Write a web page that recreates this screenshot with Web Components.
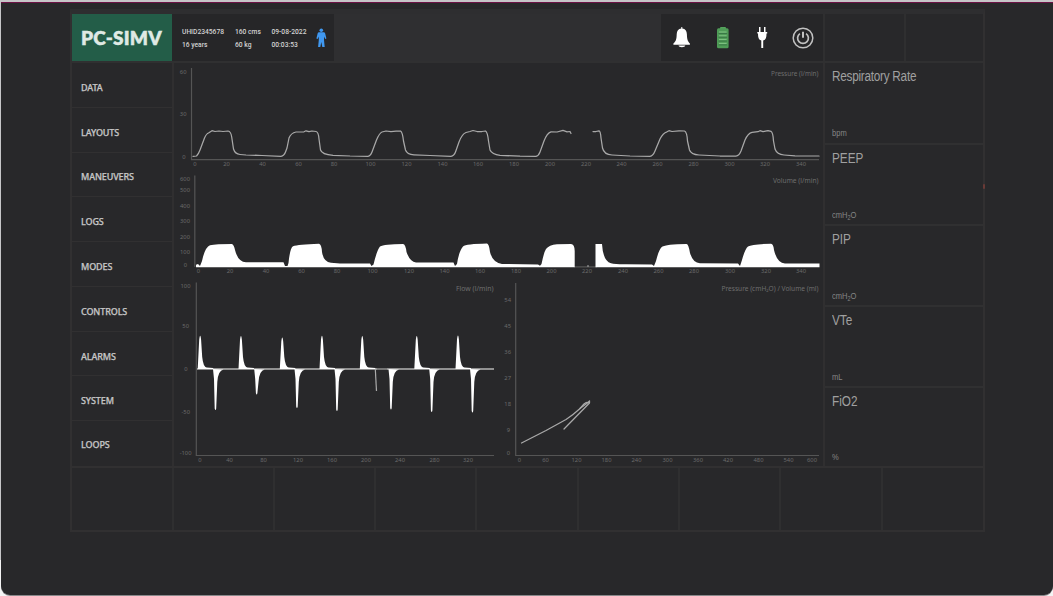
<!DOCTYPE html>
<html lang="en">
<head>
<meta charset="utf-8">
<title>Ventilator monitor</title>
<style>
html,body{margin:0;height:100%;background:#c6c6c8;overflow:hidden}
body{font-family:"Noto Sans","Open Sans",sans-serif;color:#c4c4c4}
sub{font-size:6.500px;line-height:0;vertical-align:-2px}
</style>
</head>
<body>
<vent-screen>
  <top-bar slot="top"></top-bar>
  <side-menu slot="menu">
    <menu-entry>DATA</menu-entry><menu-entry>LAYOUTS</menu-entry><menu-entry>MANEUVERS</menu-entry>
    <menu-entry>LOGS</menu-entry><menu-entry>MODES</menu-entry><menu-entry>CONTROLS</menu-entry>
    <menu-entry>ALARMS</menu-entry><menu-entry>SYSTEM</menu-entry><menu-entry>LOOPS</menu-entry>
  </side-menu>
  <chart-area slot="charts"></chart-area>
  <vital-card slot="vitals" style="--track:-.3px">Respiratory Rate<span slot="unit">bpm</span></vital-card>
  <vital-card slot="vitals">PEEP<span slot="unit">cmH<sub>2</sub>O</span></vital-card>
  <vital-card slot="vitals">PIP<span slot="unit">cmH<sub>2</sub>O</span></vital-card>
  <vital-card slot="vitals">VTe<span slot="unit">mL</span></vital-card>
  <vital-card slot="vitals">FiO2<span slot="unit">%</span></vital-card>
</vent-screen>
<script>
const define=(name,html,init)=>customElements.define(name,class extends HTMLElement{
  constructor(){
    super();
    const t=document.createElement('template');
    t.innerHTML=html;
    this.attachShadow({mode:'open'}).append(t.content.cloneNode(true));
  }
  connectedCallback(){ if(init) init.call(this); }
});

define('vent-screen',`<style>
:host{display:block;width:1053px;height:596px;box-sizing:border-box;padding:2px 0 1px 1px;background:linear-gradient(#c6c6c8 560px,#f4f4f4 560px)}
.case{height:593px;box-sizing:border-box;background:#28282a;border-top:1px solid #6c1245;border-radius:0 0 9px 9px;padding:6px 0 0 69px;box-shadow:0 1px 0 #88888a}
.frame{position:relative;width:915px;height:523px;box-sizing:border-box;border:2px solid #313031;border-top:5px solid #2e2e30;display:grid;grid-template-rows:47px 407px 1fr}
.main{display:grid;grid-template-columns:100px 653px 1fr;border-top:2px solid #303031;border-bottom:2px solid #313031;box-sizing:border-box}
.charts{border:solid #302f30;border-width:0 2px;box-sizing:border-box}
.vitals{display:grid;grid-template-rows:82px 81px 81px 81px 1fr}
.bottom{display:grid;grid-template-columns:100px repeat(7,101.300px) 1fr}
.bottom i{border-left:2px solid #2f2f30;margin-left:-.5px}
.bottom i:first-child{border:0}
.mark{position:absolute;right:-2px;top:170px;width:2px;height:5px;background:#693a36;border-radius:1px}
</style>
<div class="case"><div class="frame">
<slot name="top"></slot>
<div class="main"><slot name="menu"></slot><div class="charts"><slot name="charts"></slot></div><div class="vitals"><slot name="vitals"></slot></div></div>
<div class="bottom"><i></i><i></i><i></i><i></i><i></i><i></i><i></i><i></i><i></i></div>
<div class="mark"></div>
</div></div>`);

define('top-bar',`<style>
:host{display:grid;grid-template-columns:100px 162px 327px 162px 81px 1fr;height:47px}
.mode{background:#235d48;color:#dfe9e4;font:800 19px/48px Lato,sans-serif;padding-left:9px;white-space:nowrap;letter-spacing:.15px;-webkit-text-stroke:.35px #dfe9e4}
.patient{display:grid;grid-template-columns:53px 36.500px 44.500px 1fr;padding-left:10px;align-items:center;background:#262628;font:500 6.700px/13px Roboto,sans-serif;color:#d2d2d2;white-space:nowrap}
.patient div{padding-top:1.400px}
.mid{background:#2f2f31}
.icons{display:grid;grid-template-columns:repeat(4,40.400px);padding-left:1px;box-sizing:border-box;background:#262628;align-items:center;justify-items:center}
.cell{border-left:2px solid #2f2f30}
svg{display:block}
</style>
<div class="mode">PC-SIMV</div>
<div class="patient"><div>UHID2345678<br>16 years</div><div>160 cms<br>60 kg</div><div>09-08-2022<br>00:03:53</div>
<svg width="11" height="20" viewBox="0 0 11 20" fill="#4098f0"><circle cx="5.3" cy="2.2" r="1.8"/><path d="M3 4.300h4.800q1 0 1.300 1l1.300 5.200-1.200.5-1.200-2.500v3.500l.7 6.900H6.300l-1-4.800-1 4.800H2.100l.7-6.900V8.500l-1.200 2.500-1.200-.5L1.700 5.300q.3-1 1.300-1Z"/></svg></div>
<div class="mid"></div>
<div class="icons">
<svg width="20" height="24" viewBox="0 0 20 24" fill="#fff"><path d="M9.300 1h1v1.500c3 .4 4.500 2.500 4.600 5.800.1 5 .8 7.200 3 9.200v1.300H1.400v-1.300c2.500-2 3.200-4.300 3.300-9.200.1-3.300 1.600-5.400 4.600-5.800ZM6.500 19.500h6.800c-.3 1.300-1.400 1.700-3.400 1.700s-3.100-.4-3.400-1.700Z"/></svg>
<svg width="14" height="24" viewBox="0 0 14 24"><rect x="4" y="1" width="6" height="3" rx="1" fill="#55a45c"/><rect x="1" y="2.200" width="11.600" height="20" rx="1.500" fill="#4f9c57"/><path d="M3 6h7.600M3 9.800h7.600M3 13.600h7.600M3 17.400h7.600" stroke="#83c486" stroke-width="1"/><path d="M2.500 7.500h8.600M2.500 11.300h8.600M2.500 15.100h8.600M2.500 18.900h8.600" stroke="#356f42" stroke-width=".8"/></svg>
<svg width="13" height="24" viewBox="0 0 13 24" fill="#fff"><path d="M3 1h1.500v5H8V1h1.500v5h1.700v1.500h-.7c0 4-.6 6.300-3.300 7V22H5.300v-7.500C2.600 13.800 2 11.500 2 7.500h-.7V6H3Z"/></svg>
<svg width="24" height="24" viewBox="0 0 24 24" fill="none" stroke="#c1c1c1" stroke-width="1.500"><circle cx="12" cy="12" r="9.800"/><path d="M8.900 7.600a5.400 5.400 0 1 0 6.200 0" stroke-width="1.700"/><path d="M12 5.800v6" stroke-width="2"/></svg>
</div>
<div class="cell"></div><div class="cell"></div>`);

define('side-menu',`<style>:host{display:grid;grid-template-rows:repeat(9,1fr)}</style><slot></slot>`);

define('menu-entry',`<style>
:host{display:flex;align-items:center;padding:5px 0 0 9px;border-bottom:1.500px solid #313031;font:500 9px "Noto Sans",sans-serif;color:#c6c6c6;letter-spacing:-.12px;-webkit-text-stroke:.25px #c6c6c6}
:host(:last-of-type){border-bottom:0;padding-top:2px}
</style><slot></slot>`);

define('vital-card',`<style>
:host{display:flex;flex-direction:column;justify-content:space-between;padding:5px 0 3px 7px;border-bottom:2px solid #303031;box-sizing:border-box;color:#a0a0a0;min-height:0}
:host(:first-of-type){padding-bottom:4px}
:host(:last-of-type){border-bottom:0}
.name,.unit{transform-origin:0 50%;transform:scaleX(.84);white-space:nowrap}
.name{font:14px/16px "Liberation Sans",sans-serif;letter-spacing:var(--track,0)}
.unit{font:9px/12px "Liberation Sans",sans-serif;color:#858585}
</style><div class="name"><slot></slot></div><div class="unit"><slot name="unit"></slot></div>`);

/* Each plot uses screen units, so neighbouring plots share one coordinate system. */
const plots={
 pressure:{box:[174,63,648,106],title:['Pressure (l/min)',818.500,76,47.500],
  y:[[186.500,73.500,'60'],[186.500,115.500,'30'],[185.500,159,'0']],
  x:{y:166,w:8,v:[[195,'0'],[226.500,'20'],[262.500,'40'],[298.500,'60'],[334,'80'],[370.500,'100'],[406.500,'120'],[442.500,'140'],[478,'160'],[514,'180'],[550,'200'],[586,'220'],[621.500,'240'],[657.500,'260'],[693.500,'280'],[729.500,'300'],[765,'320'],[801,'340']]},
  body:`<path class="ax" d="M191.500 68V159.700H819"/>
  <path class="ln" d="M193 156.300L196.500 156Q198.500 154 200 150L204.500 138Q206.500 133.500 208.500 133L212 130.700 215 131.500 219 131 223 131.500 228 131Q231 131.500 231.700 137L233.500 149Q235 154 240 154.500L246 155 262 155.500 281 156.300Q284 156 285.500 152L287 148 289 138Q291 133 296 132L304 131.800 306 130.800 309 131.700 312 131 316 131.500Q318.500 132 319 139L320.500 150Q322 154.500 333 155.300L350 156 368 156.300Q370.500 156 372 152L376.500 140Q379.500 133 382 132L386 131 391 131.700 396 131.200 400.500 131Q402.500 132 403.500 141L405.500 150Q407 154.500 414 154.800L430 155.500 451 156.300Q454 156 455.500 152L459 142Q462 134 466 132.500L470 131.500 473 130.500 477 131.500 482 131.500 485.500 131Q487.500 132 488.500 141L490 150Q492 154.500 500 155.300L520 156.200 536 156.400Q538.500 156 540 152L544 141Q547 133 551 131.800L557 132 563 130.400 567 131.800 570 131.500 571 133.500M593 131.500H596L599 130.800Q600.500 131 601 138L602.500 148Q604 154.500 612 155L630 156 650 156.300Q653 156 655 151L660 139Q663 133 667 131.800L669 130.700 672 131.500 679 130.800 684.500 131Q687 132 687.500 141L689.500 150Q691 154.500 699 155L720 156 736 156Q739 156 741 151L745 140Q748 133 752 132.300L758 131.700 760 130.700 763 131.700 768 130.600 771 131.300Q773 132.500 773.500 141L775 149Q777 154.500 784 155L795 155.800 819 156"/>`},
 volume:{box:[174,169,648,107],title:['Volume (l/min)',818.500,183,45.500],
  y:[[190,180.500,'600'],[190,192,'500'],[190,207.500,'400'],[190,223,'300'],[190,238.500,'200'],[190,253.500,'100'],[187,266.500,'0']],
  x:{y:273,w:8,v:[[198.500,'0'],[230,'20'],[266,'40'],[301.500,'60'],[337,'80'],[372.500,'100'],[409,'120'],[444.500,'140'],[480,'160'],[516,'180'],[551.500,'200'],[587,'220'],[623,'240'],[658.500,'260'],[694,'280'],[730,'300'],[766,'320'],[801,'340']]},
  body:`<path class="ax" d="M194.800 175.500V267M574 266.800H597"/>
  <path fill="#fff" d="M196 267.200V264.700L198 264 200 266 202 261Q205 247 210 245.200 216 244 232 244 234 245 235 250 238 262 246 262.200H283.500L285 266H287.500L288.500 263Q290 248 293 246.300 298 244.300 319 243.700 321.500 244 322 252 323.500 262 331 262.700L340 263.500H370L371.500 266 373.500 264.500Q377 250 380 246.500 384 244 403 244 405.500 244 406.500 252 410 262 416 262.400H453.500L455 266 457 264Q459 251 463 246.500 466 244 487 243.600 489 244 490 252 492.500 262.500 502 264L538 264.500 540 265.700 541.500 264Q544 252 546 249 549 245 557 244.300L571 244Q574.500 244 574.700 251V267.200Z"/>
  <path fill="#fff" d="M595.500 267.200V244H602Q603 261 611 263.300 615 264.400 626 264.300L652 264.600 654 266 656 261Q659 249 662 246.800 666 244.200 686.500 244 688.500 244 690 253 693 263 700 263.300L738 263.600 740 266 742 260Q745 249 748 246.500 752 244 771 243.700 773.500 244 774 250 777 263 785 263.500H819.500V267.200Z"/><circle cx="588" cy="266" r=".8" fill="#bbb"/>`},
 flow:{box:[174,276,324,189],title:['Flow (l/min)',493.500,290.500,37.500],
  y:[[190.500,288,'100'],[189,327.500,'50'],[187.500,371,'0'],[190,414,'-50'],[191.500,454.500,'-100']],
  x:{y:461.500,w:8,v:[[200,'0'],[229.500,'40'],[263.500,'80'],[298,'120'],[332,'160'],[366,'200'],[400,'240'],[434.500,'280'],[468,'320']]},
  body:''},
 loop:{box:[498,276,324,189],title:['Pressure (cmH₂O) / Volume (ml)',818.500,290.500,97],
  y:[[511,301.500,'54'],[511,327.500,'45'],[511,354,'36'],[511,380,'27'],[511,405.500,'18'],[510,431.500,'9'],[510,455,'0']],
  x:{y:461.500,w:8,v:[[519.500,'0'],[545.500,'60'],[576.500,'120'],[606.500,'180'],[636.500,'240'],[667.500,'300'],[698,'360'],[728,'420'],[758.500,'480'],[788.500,'540'],[812,'600']]},
  body:`<path class="ax" d="M515.700 283V455.500H819"/><path class="ln" d="M521.500 443L546 430.500 566 419.500Q573 415 579.500 409L584 404Q586 402 588.500 402L589.500 400.800V403L564 429"/><path class="ln" d="M580 408.500L586 404 589 402"/>`}
};
{
  let s='<path class="ax" d="M196.300 282.500V455.500H494"/><path d="M197 369H494" stroke="#b5b5b5" stroke-width="1.300"/>';
  for(const [x,t] of [[200.200,335.700],[241,336],[282.300,337.500],[322,335.800],[362.300,336],[416.800,336],[458,335.500]])
    s+=`<path fill="#fff" d="M${x-2.500} 369L${x-1} ${t+4}Q${x} ${t-4} ${x+.9} ${t+4}L${x+2} 357Q${x+3} 367 ${x+6.500} 367.500L${x+13} 368V369Z"/>`;
  for(const [x,b] of [[215.500,410.500],[256.700,395],[297,408.500],[337,411.500],[391,410],[431.700,412.500],[472.500,413]])
    s+=`<path fill="#fff" d="M${x-2.500} 369L${x-1.500} 379 ${x-.8} ${b-2}Q${x} ${b+1} ${x+.7} ${b-2}L${x+1.800} 382Q${x+2.500} 370.500 ${x+8} 369.500Z"/>`;
  s+='<path d="M375.300 369L376.500 391" stroke="#aaa" stroke-width="1.200"/><path d="M377 369H387" stroke="#6d6d6d" stroke-width="1.500"/>';
  plots.flow.body=s;
}

define('wave-plot',`<style>
:host{display:block}
svg{display:block}
text{font:5.800px "Noto Sans",sans-serif;fill:#6b6b6b}
.title{font-size:6.400px;fill:#6e6e6e}
.ax{fill:none;stroke:#555;stroke-width:1.200}
.ln{fill:none;stroke:#a9a9a9;stroke-width:1.250;stroke-linejoin:round;stroke-linecap:round}
</style>`,function(){
  const p=plots[this.getAttribute('kind')],[x,y,w,h]=p.box,[t,tx,ty,tw]=p.title;
  const d=document.createElement('template');
  d.innerHTML=`<svg width="${w}" height="${h}" viewBox="${x} ${y} ${w} ${h}">${p.body}
  <text class="title" x="${tx-tw}" y="${ty}" textLength="${tw}" lengthAdjust="spacingAndGlyphs">${t}</text>
  ${p.y.map(([a,b,c])=>`<text x="${a}" y="${b}" text-anchor="end">${c}</text>`).join('')}
  ${p.x.v.map(([a,c])=>`<text x="${a}" y="${p.x.y}" text-anchor="middle">${c}</text>`).join('')}</svg>`;
  this.shadowRoot.append(d.content);
});

define('chart-area',`<style>:host{display:block}.row{display:flex}</style>
<wave-plot kind="pressure"></wave-plot><wave-plot kind="volume"></wave-plot>
<div class="row"><wave-plot kind="flow"></wave-plot><wave-plot kind="loop"></wave-plot></div>`);
</script>
</body>
</html>
